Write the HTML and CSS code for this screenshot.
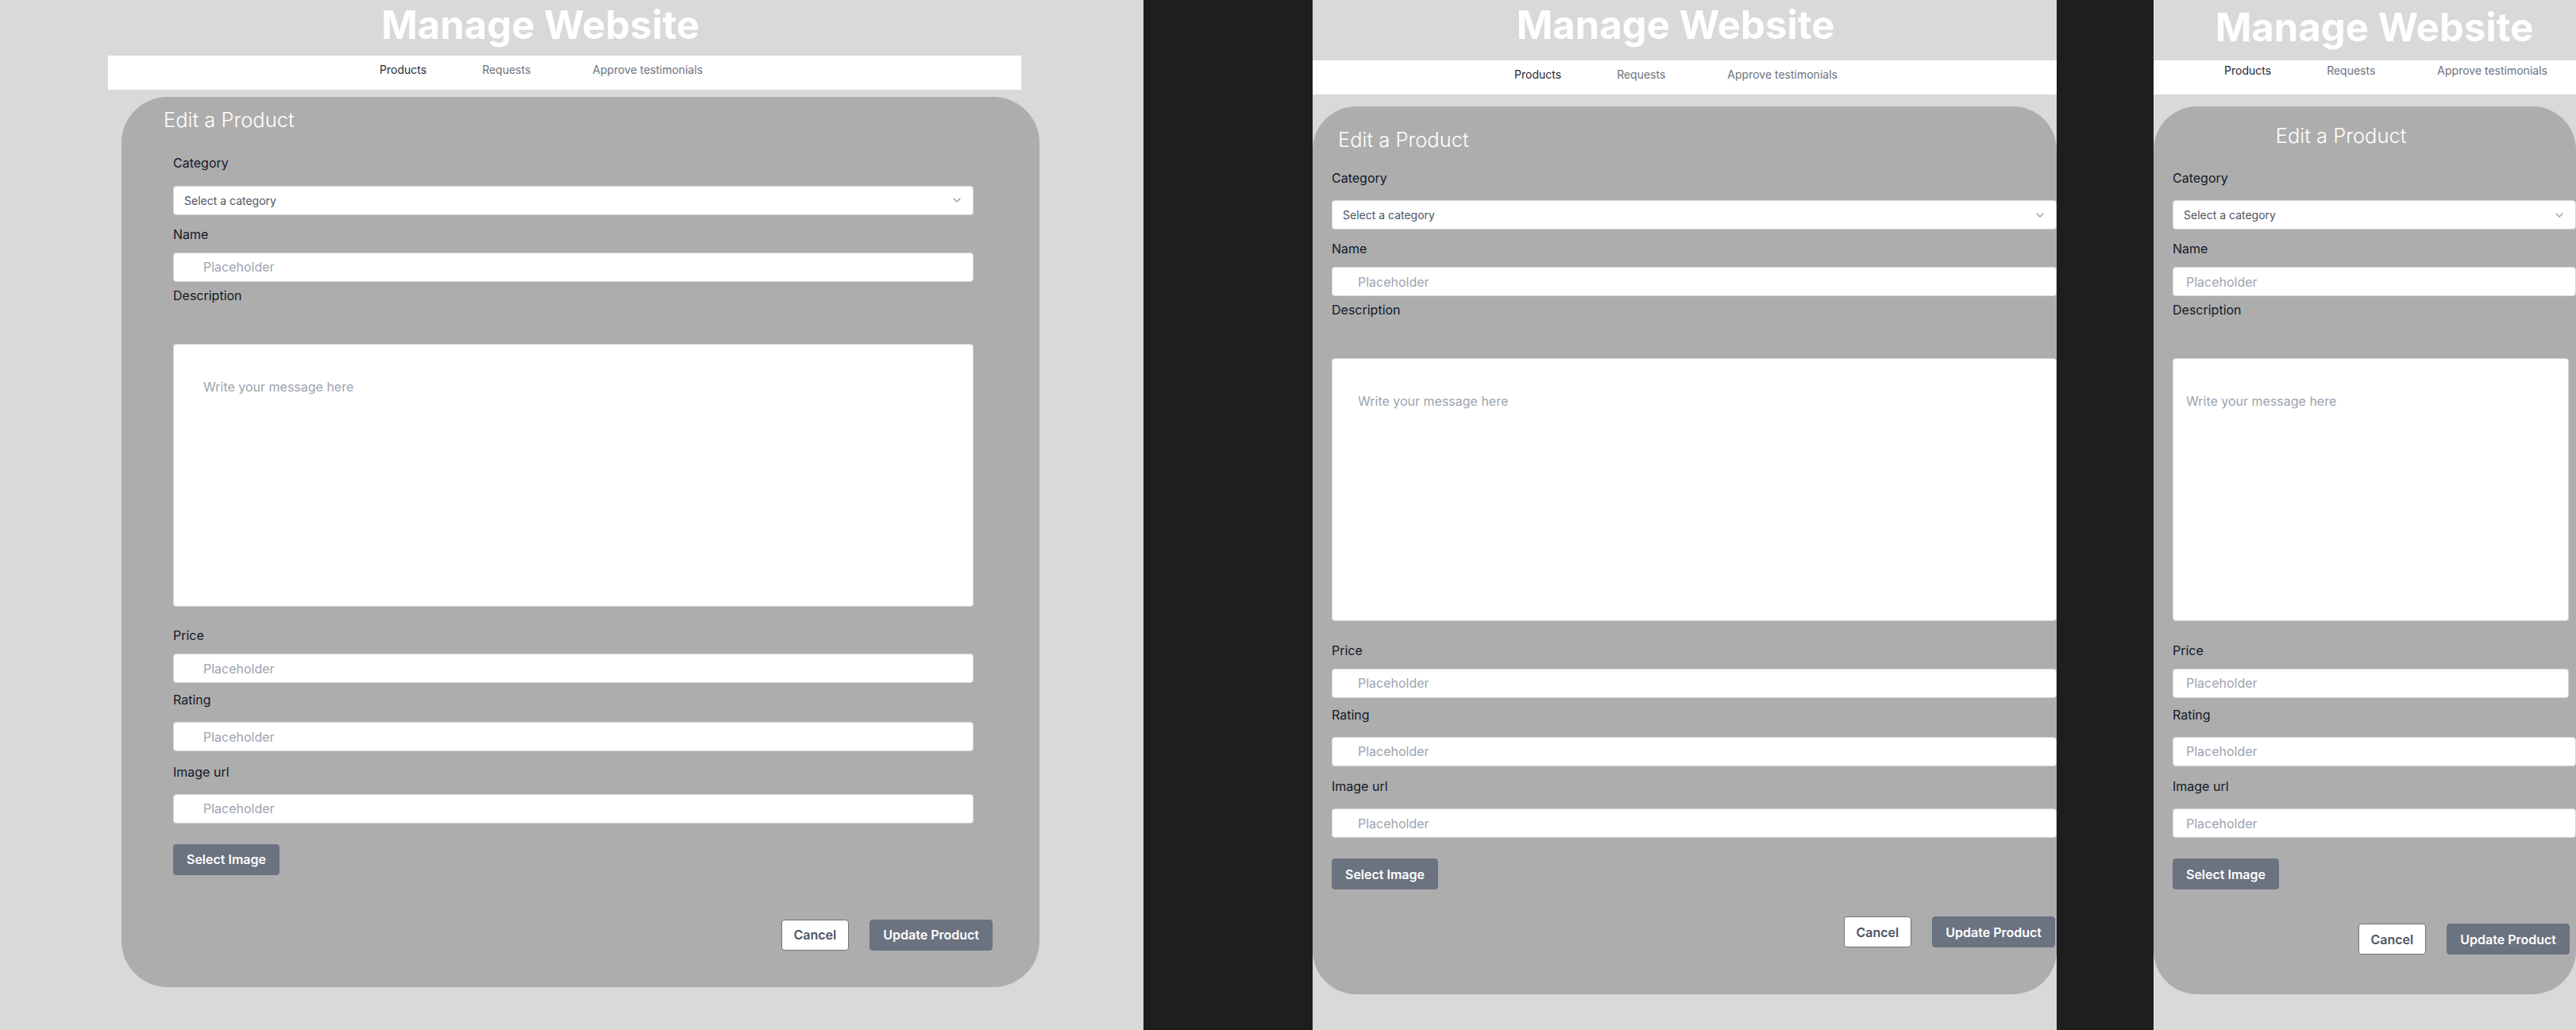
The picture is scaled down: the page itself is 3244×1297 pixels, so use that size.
FILE: index.html
```html
<!DOCTYPE html>
<html lang="en">
<head>
<meta charset="utf-8">
<title>Manage Website</title>
<link rel="stylesheet" href="styles.css">
</head>
<body>
<div class="screen">

  <section class="panel panel-lg">
    <h1 class="site-title">Manage Website</h1>
    <nav class="topnav">
      <a class="nav-link active" href="#">Products</a>
      <a class="nav-link" href="#">Requests</a>
      <a class="nav-link" href="#">Approve testimonials</a>
    </nav>
    <main class="card">
      <h2 class="card-title">Edit a Product</h2>
      <form class="form">
        <div class="field f-category">
          <label class="field-label">Category</label>
          <div class="control select"><span>Select a category</span><svg width="10" height="6" viewBox="0 0 10 6"><path d="M1 1l4 4 4-4" fill="none" stroke="#9ca3af" stroke-width="1.5" stroke-linecap="round" stroke-linejoin="round"/></svg></div>
        </div>
        <div class="field f-name">
          <label class="field-label">Name</label>
          <input class="control text" placeholder="Placeholder">
        </div>
        <div class="field f-desc">
          <label class="field-label">Description</label>
          <textarea class="control area" placeholder="Write your message here"></textarea>
        </div>
        <div class="field f-price">
          <label class="field-label">Price</label>
          <input class="control text" placeholder="Placeholder">
        </div>
        <div class="field f-rating">
          <label class="field-label">Rating</label>
          <input class="control text" placeholder="Placeholder">
        </div>
        <div class="field f-image">
          <label class="field-label">Image url</label>
          <input class="control text" placeholder="Placeholder">
        </div>
        <button type="button" class="btn btn-primary pick-btn">Select Image</button>
        <div class="actions">
          <button type="button" class="btn btn-outline">Cancel</button>
          <button type="button" class="btn btn-primary">Update Product</button>
        </div>
      </form>
    </main>
  </section>

  <div class="band band-a"></div>

  <section class="panel panel-md">
    <h1 class="site-title">Manage Website</h1>
    <nav class="topnav">
      <a class="nav-link active" href="#">Products</a>
      <a class="nav-link" href="#">Requests</a>
      <a class="nav-link" href="#">Approve testimonials</a>
    </nav>
    <main class="card">
      <h2 class="card-title">Edit a Product</h2>
      <form class="form">
        <div class="field f-category">
          <label class="field-label">Category</label>
          <div class="control select"><span>Select a category</span><svg width="10" height="6" viewBox="0 0 10 6"><path d="M1 1l4 4 4-4" fill="none" stroke="#9ca3af" stroke-width="1.5" stroke-linecap="round" stroke-linejoin="round"/></svg></div>
        </div>
        <div class="field f-name">
          <label class="field-label">Name</label>
          <input class="control text" placeholder="Placeholder">
        </div>
        <div class="field f-desc">
          <label class="field-label">Description</label>
          <textarea class="control area" placeholder="Write your message here"></textarea>
        </div>
        <div class="field f-price">
          <label class="field-label">Price</label>
          <input class="control text" placeholder="Placeholder">
        </div>
        <div class="field f-rating">
          <label class="field-label">Rating</label>
          <input class="control text" placeholder="Placeholder">
        </div>
        <div class="field f-image">
          <label class="field-label">Image url</label>
          <input class="control text" placeholder="Placeholder">
        </div>
        <button type="button" class="btn btn-primary pick-btn">Select Image</button>
        <div class="actions">
          <button type="button" class="btn btn-outline">Cancel</button>
          <button type="button" class="btn btn-primary">Update Product</button>
        </div>
      </form>
    </main>
  </section>

  <div class="band band-b"></div>

  <section class="panel panel-sm">
    <h1 class="site-title">Manage Website</h1>
    <nav class="topnav">
      <a class="nav-link active" href="#">Products</a>
      <a class="nav-link" href="#">Requests</a>
      <a class="nav-link" href="#">Approve testimonials</a>
    </nav>
    <main class="card">
      <h2 class="card-title">Edit a Product</h2>
      <form class="form">
        <div class="field f-category">
          <label class="field-label">Category</label>
          <div class="control select"><span>Select a category</span><svg width="10" height="6" viewBox="0 0 10 6"><path d="M1 1l4 4 4-4" fill="none" stroke="#9ca3af" stroke-width="1.5" stroke-linecap="round" stroke-linejoin="round"/></svg></div>
        </div>
        <div class="field f-name">
          <label class="field-label">Name</label>
          <input class="control text" placeholder="Placeholder">
        </div>
        <div class="field f-desc">
          <label class="field-label">Description</label>
          <textarea class="control area narrow" placeholder="Write your message here"></textarea>
        </div>
        <div class="field f-price">
          <label class="field-label">Price</label>
          <input class="control text narrow" placeholder="Placeholder">
        </div>
        <div class="field f-rating">
          <label class="field-label">Rating</label>
          <input class="control text" placeholder="Placeholder">
        </div>
        <div class="field f-image">
          <label class="field-label">Image url</label>
          <input class="control text" placeholder="Placeholder">
        </div>
        <button type="button" class="btn btn-primary pick-btn">Select Image</button>
        <div class="actions">
          <button type="button" class="btn btn-outline">Cancel</button>
          <button type="button" class="btn btn-primary">Update Product</button>
        </div>
      </form>
    </main>
  </section>

</div>
</body>
</html>
```

FILE: styles.css
```css
html, body {
  margin: 0;
  padding: 0;
}

body {
  background: #1e1e1e;
  font-family: Inter, "Noto Sans", Arial, sans-serif;
}

.screen {
  display: flex;
  width: 3244px;
  height: 1297px;
  overflow: hidden;
}

.panel {
  flex: none;
  height: 1297px;
  background: #d9d9d9;
  overflow: hidden;
}

.panel-lg { width: 1440px; }
.panel-md { width: 937px; }
.panel-sm { width: 532px; }

.band {
  flex: none;
  background: #1e1e1e;
}
.band-a { width: 213px; }
.band-b { width: 122px; }

/* Header */
.site-title {
  margin: 0;
  font-size: 49px;
  font-weight: 700;
  line-height: 60px;
  color: #ffffff;
  text-align: center;
  white-space: nowrap;
}
.panel-lg .site-title { padding: 2px 79px 0 0; }
.panel-md .site-title { padding: 2px 23px 0 0; }
.panel-sm .site-title { padding: 5px 0 0 24px; }

.topnav {
  display: flex;
  justify-content: center;
  box-sizing: border-box;
  height: 43px;
  background: #ffffff;
  font-size: 14px;
  line-height: 20px;
}
.panel-lg .topnav { margin: 8px 0 0 136px; width: 1150px; padding: 8px 59px 0 0; }
.panel-md .topnav { margin-top: 14px; padding: 8px 22px 0 0; }
.panel-sm .topnav { margin-top: 11px; padding: 3px 0 0 53px; }

.nav-link {
  color: #6b7280;
  text-decoration: none;
  white-space: nowrap;
}
.nav-link.active { color: #1f2937; }
.nav-link + .nav-link { margin-left: 70px; }
.nav-link + .nav-link + .nav-link { margin-left: 78px; }

/* Card */
.card {
  display: block;
  box-sizing: border-box;
  background: #adadad;
}
.panel-lg .card {
  margin: 9px 0 0 153px;
  width: 1156px;
  padding: 13px 83px 46px 65px;
  border-radius: 58px;
}
.panel-md .card {
  margin-top: 15px;
  padding: 26px 0 59px 24px;
  border-radius: 55px;
}
.panel-sm .card {
  margin-top: 15px;
  padding: 21px 0 50px 24px;
  border-radius: 55px;
}

.card-title {
  margin: 0;
  font-size: 25.5px;
  font-weight: 300;
  line-height: 32px;
  color: #ffffff;
  white-space: nowrap;
}
.panel-lg .card-title { margin: 0 0 26px -12px; }
.panel-md .card-title { margin: 0 0 19.5px 8px; }
.panel-sm .card-title { margin: 0 0 24.5px 0; text-align: center; padding-right: 84px; }

/* Form */
.form { display: block; }

.field-label {
  display: block;
  font-size: 16px;
  line-height: 24px;
  color: #111827;
}

.control {
  display: block;
  box-sizing: border-box;
  width: 100%;
  height: 37px;
  margin: 0;
  background: #ffffff;
  border: 1px solid #d1d5db;
  border-radius: 4px;
  font-family: inherit;
  font-size: 16px;
  color: #111827;
  outline: none;
}
.control.narrow { width: calc(100% - 9.5px); }

.control::placeholder {
  color: #9ca3af;
  opacity: 1;
}

.select {
  display: flex;
  align-items: center;
  justify-content: space-between;
  padding: 0 15px 0 13px;
  font-size: 14px;
  color: #4b5563;
}

.text { padding: 0 12px 0 37px; }
.panel-md .text { padding-left: 32px; }
.panel-sm .text { padding-left: 16px; }

.area {
  height: 331px;
  padding: 41px 12px 0 37px;
  line-height: 24px;
  resize: none;
}
.panel-md .area { padding-left: 32px; }
.panel-sm .area { padding-left: 16px; }

.f-category .field-label { margin-bottom: 16.5px; }
.f-name { margin-top: 12px; }
.f-name .field-label { margin-bottom: 11px; }
.f-desc { margin-top: 5px; }
.f-desc .field-label { margin-bottom: 49px; }
.f-price { margin-top: 24.5px; }
.f-price .field-label { margin-bottom: 11px; }
.f-rating { margin-top: 9px; }
.f-rating .field-label { margin-bottom: 16px; }
.f-image { margin-top: 13.5px; }
.f-image .field-label { margin-bottom: 16px; }

/* Buttons */
.btn {
  box-sizing: border-box;
  padding: 6.5px 16px;
  border: 1px solid transparent;
  border-radius: 4px;
  font-family: inherit;
  font-size: 16px;
  font-weight: 600;
  line-height: 24px;
  white-space: nowrap;
  cursor: pointer;
}
.btn-primary {
  background: #6b7280;
  border-color: #6b7280;
  color: #ffffff;
}
.btn-outline {
  padding-left: 14.5px;
  padding-right: 14.5px;
  background: #ffffff;
  border-color: #6b7280;
  color: #4b5563;
}

.pick-btn {
  display: block;
  margin-top: 26px;
}

.actions {
  display: flex;
  justify-content: flex-end;
  gap: 26.5px;
}
.panel-lg .actions { margin: 56px -24px 0 0; }
.panel-md .actions { margin: 34px 2px 0 0; }
.panel-sm .actions { margin: 43px 8px 0 0; }
```
